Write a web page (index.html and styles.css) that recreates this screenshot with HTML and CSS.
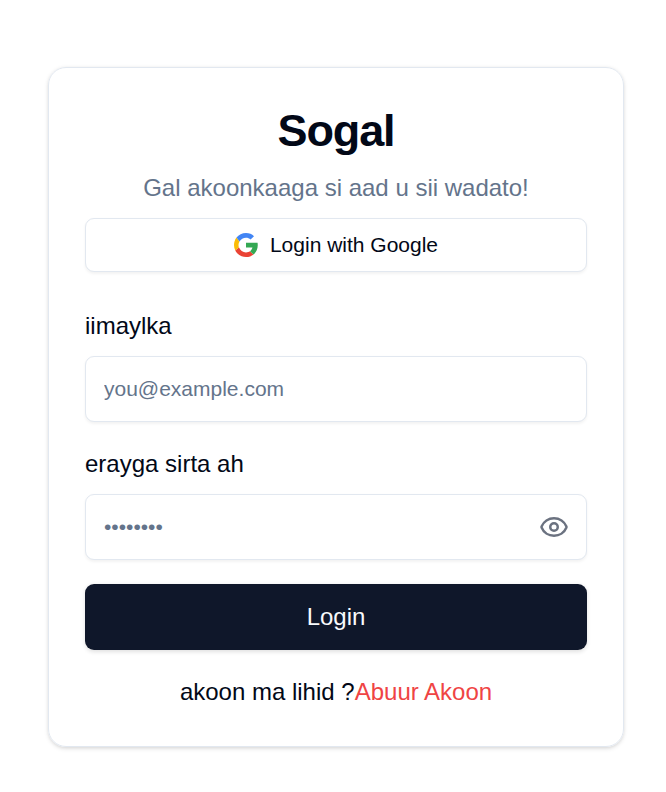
FILE: index.html
```html
<!DOCTYPE html>
<html lang="so">
<head>
<meta charset="utf-8">
<meta name="viewport" content="width=device-width, initial-scale=1">
<title>Sogal</title>
<link rel="stylesheet" href="styles.css">
</head>
<body>
<main class="card">
  <header class="header">
    <h1 class="title">Sogal</h1>
    <p class="subtitle">Gal akoonkaaga si aad u sii wadato!</p>
  </header>
  <button class="google" type="button">
    <svg class="google-icon" viewBox="0 0 48 48" aria-hidden="true">
      <path fill="#EA4335" d="M9.800 28.600 2.500 34.900C6.500 42.700 14.500 48 24 48c6 0 11-1.900 15-5.200l-7-6.300c-2.100 1.400-4.700 2.300-8 2.300-6.300 0-12-4.100-14.200-10.200z"/>
      <path fill="#FBBC05" d="M9.800 28.600C9.300 27.100 9 25.600 9 24c0-2.500.7-5 2-7L5 9C1.900 12.900 0 18.200 0 24c0 3.900.9 7.600 2.500 10.900z"/>
      <path fill="#4285F4" d="M24 9.500c3.500 0 6.700 1.200 9.200 3.600l6.800-6.800C35.900 2.400 30.500 0 24 0 16.300 0 9.400 3.500 5 9l6 8c2.800-4.500 7.500-7.500 13-7.500z"/>
      <path fill="#34A853" d="M47.500 24.500c0-1.600-.1-3.100-.4-4.900H24v9.400h12.900c-.6 3-2.400 5.500-4.900 7.500l7 6.300c5.300-4.200 8.500-10.500 8.500-18.300z"/>
    </svg>
    <span>Login with Google</span>
  </button>
  <form class="form">
    <div class="field">
      <label class="label" for="email">iimaylka</label>
      <input class="input" id="email" type="email" placeholder="you@example.com">
    </div>
    <div class="field">
      <label class="label" for="password">erayga sirta ah</label>
      <div class="password">
        <input class="input" id="password" type="password" placeholder="••••••••">
        <button class="reveal" type="button" aria-label="Show password">
          <svg class="eye" viewBox="0 0 24 24" aria-hidden="true"><path d="M2.062 12.348a1 1 0 0 1 0-.696 10.750 10.750 0 0 1 19.876 0 1 1 0 0 1 0 .696 10.750 10.750 0 0 1-19.876 0"/><circle cx="12" cy="12" r="3"/></svg>
        </button>
      </div>
    </div>
    <button class="submit" type="button">Login</button>
  </form>
  <p class="signup">akoon ma lihid ?<a class="link" href="#">Abuur Akoon</a></p>
</main>
</body>
</html>
```
FILE: styles.css
```css
* { box-sizing: border-box; }
body {
  margin: 0;
  padding: 67px 42px 45px 48px;
  background: #fff;
  color: #020817;
  font-family: "Liberation Sans", Arial, sans-serif;
}
button, input { font-family: inherit; }
.card {
  height: 680px;
  padding: 36px 36px 35px;
  border: 1px solid #e2e8f0;
  border-radius: 18px;
  box-shadow: 0 1.5px 4px rgba(0, 0, 0, .1), 0 1px 3px rgba(0, 0, 0, .06);
}
.header { text-align: center; }
.title { margin: 0; font-size: 45px; line-height: 54px; font-weight: 700; letter-spacing: -1.1px; }
.subtitle { margin: 12px 0 0; font-size: 24px; line-height: 36px; color: #64748b; }
.google {
  display: flex;
  align-items: center;
  justify-content: center;
  gap: 12px;
  width: 100%;
  height: 54px;
  margin-top: 12px;
  padding: 0;
  border: 1px solid #e2e8f0;
  border-radius: 9px;
  background: #fff;
  color: #020817;
  font-size: 21px;
  box-shadow: 0 1.5px 3px rgba(0, 0, 0, .05);
}
.google-icon { width: 24px; height: 24px; }
.form { margin-top: 36px; }
.field { margin-bottom: 24px; }
.label { display: block; height: 36px; margin-bottom: 12px; font-size: 24px; line-height: 36px; }
.input {
  display: block;
  width: 100%;
  height: 66px;
  padding: 0 18px;
  border: 1px solid #e2e8f0;
  border-radius: 9px;
  background: #fff;
  color: #020817;
  font-size: 21px;
  box-shadow: 0 1.5px 3px rgba(0, 0, 0, .05);
}
.input::placeholder { color: #64748b; opacity: 1; }
.password { position: relative; }
.reveal {
  position: absolute;
  top: 18px;
  right: 18px;
  width: 30px;
  height: 30px;
  padding: 0;
  border: 0;
  background: none;
}
.eye { display: block; width: 30px; height: 30px; fill: none; stroke: #6b7280; stroke-width: 2; stroke-linecap: round; stroke-linejoin: round; }
.submit {
  display: block;
  width: 100%;
  height: 66px;
  border: 0;
  border-radius: 9px;
  background: #0f172a;
  color: #f8fafc;
  font-size: 24px;
  box-shadow: 0 1.5px 4px rgba(0, 0, 0, .12);
}
.signup { margin: 24px 0 0; text-align: center; font-size: 24px; line-height: 36px; }
.link { color: #ef4444; text-decoration: none; }
```
